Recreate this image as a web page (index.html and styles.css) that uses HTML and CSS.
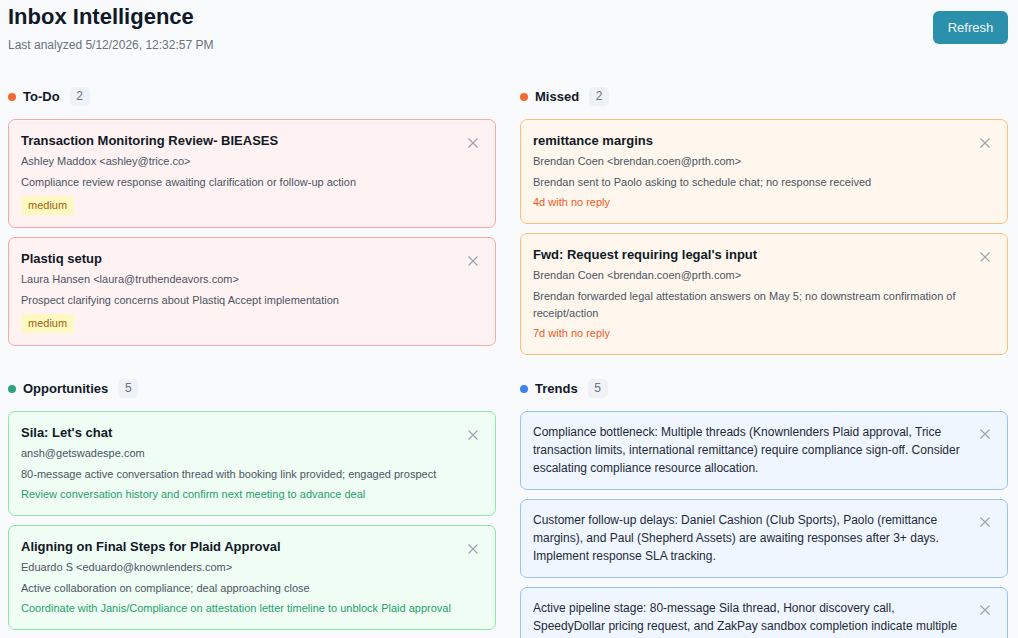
FILE: index.html
```html
<!DOCTYPE html>
<html>
<head>
  <meta charset="UTF-8">
  <title>Inbox Intelligence</title>
  <link rel="stylesheet" href="styles.css">
</head>
<body>
  <div class="page">
    <div class="top">
      <div>
        <h1 class="title">Inbox Intelligence</h1>
        <div class="analyzed">Last analyzed 5/12/2026, 12:32:57 PM</div>
      </div>
      <button class="refresh">Refresh</button>
    </div>

    <div class="grid">
      <!-- To-Do -->
      <div class="section">
        <div class="section-head">
          <span class="dot dot-todo"></span>
          <span class="section-name">To-Do</span>
          <span class="count">2</span>
        </div>
        <div class="card card-todo">
          <div class="card-body">
            <div class="card-title">Transaction Monitoring Review- BIEASES</div>
            <div class="sender">Ashley Maddox &lt;ashley@trice.co&gt;</div>
            <div class="summary">Compliance review response awaiting clarification or follow-up action</div>
            <span class="priority">medium</span>
          </div>
          <button class="close"><svg viewBox="0 0 10 10"><path d="M0.5 0.5 L9.5 9.5 M9.5 0.5 L0.5 9.5"/></svg></button>
        </div>
        <div class="card card-todo">
          <div class="card-body">
            <div class="card-title">Plastiq setup</div>
            <div class="sender">Laura Hansen &lt;laura@truthendeavors.com&gt;</div>
            <div class="summary">Prospect clarifying concerns about Plastiq Accept implementation</div>
            <span class="priority">medium</span>
          </div>
          <button class="close"><svg viewBox="0 0 10 10"><path d="M0.5 0.5 L9.5 9.5 M9.5 0.5 L0.5 9.5"/></svg></button>
        </div>
      </div>

      <!-- Missed -->
      <div class="section">
        <div class="section-head">
          <span class="dot dot-missed"></span>
          <span class="section-name">Missed</span>
          <span class="count">2</span>
        </div>
        <div class="card card-missed">
          <div class="card-body">
            <div class="card-title">remittance margins</div>
            <div class="sender">Brendan Coen &lt;brendan.coen@prth.com&gt;</div>
            <div class="summary">Brendan sent to Paolo asking to schedule chat; no response received</div>
            <div class="note note-missed">4d with no reply</div>
          </div>
          <button class="close"><svg viewBox="0 0 10 10"><path d="M0.5 0.5 L9.5 9.5 M9.5 0.5 L0.5 9.5"/></svg></button>
        </div>
        <div class="card card-missed">
          <div class="card-body">
            <div class="card-title">Fwd: Request requiring legal's input</div>
            <div class="sender">Brendan Coen &lt;brendan.coen@prth.com&gt;</div>
            <div class="summary">Brendan forwarded legal attestation answers on May 5; no downstream confirmation of receipt/action</div>
            <div class="note note-missed">7d with no reply</div>
          </div>
          <button class="close"><svg viewBox="0 0 10 10"><path d="M0.5 0.5 L9.5 9.5 M9.5 0.5 L0.5 9.5"/></svg></button>
        </div>
      </div>

      <!-- Opportunities -->
      <div class="section">
        <div class="section-head">
          <span class="dot dot-opp"></span>
          <span class="section-name">Opportunities</span>
          <span class="count">5</span>
        </div>
        <div class="card card-opp">
          <div class="card-body">
            <div class="card-title">Sila: Let's chat</div>
            <div class="sender">ansh@getswadespe.com</div>
            <div class="summary">80-message active conversation thread with booking link provided; engaged prospect</div>
            <div class="note note-opp">Review conversation history and confirm next meeting to advance deal</div>
          </div>
          <button class="close"><svg viewBox="0 0 10 10"><path d="M0.5 0.5 L9.5 9.5 M9.5 0.5 L0.5 9.5"/></svg></button>
        </div>
        <div class="card card-opp">
          <div class="card-body">
            <div class="card-title">Aligning on Final Steps for Plaid Approval</div>
            <div class="sender">Eduardo S &lt;eduardo@knownlenders.com&gt;</div>
            <div class="summary">Active collaboration on compliance; deal approaching close</div>
            <div class="note note-opp">Coordinate with Janis/Compliance on attestation letter timeline to unblock Plaid approval</div>
          </div>
          <button class="close"><svg viewBox="0 0 10 10"><path d="M0.5 0.5 L9.5 9.5 M9.5 0.5 L0.5 9.5"/></svg></button>
        </div>
      </div>

      <!-- Trends -->
      <div class="section">
        <div class="section-head">
          <span class="dot dot-trend"></span>
          <span class="section-name">Trends</span>
          <span class="count">5</span>
        </div>
        <div class="card card-trend">
          <div class="card-body trend-text">Compliance bottleneck: Multiple threads (Knownlenders Plaid approval, Trice transaction limits, international remittance) require compliance sign-off. Consider escalating compliance resource allocation.</div>
          <button class="close"><svg viewBox="0 0 10 10"><path d="M0.5 0.5 L9.5 9.5 M9.5 0.5 L0.5 9.5"/></svg></button>
        </div>
        <div class="card card-trend">
          <div class="card-body trend-text">Customer follow-up delays: Daniel Cashion (Club Sports), Paolo (remittance margins), and Paul (Shepherd Assets) are awaiting responses after 3+ days. Implement response SLA tracking.</div>
          <button class="close"><svg viewBox="0 0 10 10"><path d="M0.5 0.5 L9.5 9.5 M9.5 0.5 L0.5 9.5"/></svg></button>
        </div>
        <div class="card card-trend">
          <div class="card-body trend-text">Active pipeline stage: 80-message Sila thread, Honor discovery call, SpeedyDollar pricing request, and ZakPay sandbox completion indicate multiple deals progressing toward close.</div>
          <button class="close"><svg viewBox="0 0 10 10"><path d="M0.5 0.5 L9.5 9.5 M9.5 0.5 L0.5 9.5"/></svg></button>
        </div>
      </div>
    </div>
  </div>
</body>
</html>
```

FILE: styles.css
```css
html, body { margin: 0; padding: 0; background: #f8fafc; }
body { font-family: "Liberation Sans", Arial, Helvetica, sans-serif; color: #111827; }

.page { padding: 4px 10px 24px 8px; }

/* header */
.top { display: flex; justify-content: space-between; align-items: flex-start; }
.title { margin: 0; font-size: 22px; line-height: 26px; font-weight: 700; color: #111827; }
.analyzed { margin-top: 7px; font-size: 12px; line-height: 16px; color: #6b7280; }
.refresh {
  margin-top: 7px; width: 75px; height: 33px; border: none; border-radius: 6px;
  background: #2b90ac; color: #f1f8fb; font-family: inherit; font-size: 13px; cursor: pointer;
}

/* columns */
.grid { margin-top: 34px; display: grid; grid-template-columns: 1fr 1fr; column-gap: 24px; row-gap: 24px; }

.section-head { display: flex; align-items: center; height: 19px; margin-bottom: 13px; }
.dot { width: 8px; height: 8px; border-radius: 50%; margin-right: 7px; }
.dot-todo { background: #f26a33; }
.dot-missed { background: #f26a33; }
.dot-opp { background: #2da57a; }
.dot-trend { background: #3b82f6; }
.section-name { font-size: 13px; font-weight: 700; color: #111827; }
.count {
  margin-left: 10px; height: 19px; min-width: 20px; box-sizing: border-box; padding: 0 6px;
  border-radius: 5px; background: #eef1f6; color: #6b7280; font-size: 12px; line-height: 19px; text-align: center;
}

/* cards */
.card { display: flex; gap: 9px; border: 1px solid; border-radius: 7px; padding: 12px; margin-bottom: 9px; }
.card:last-child { margin-bottom: 0; }
.card-todo { background: #fef3f2; border-color: #f9a8a4; }
.card-missed { background: #fff7ed; border-color: #fbbf7c; }
.card-opp { background: #f0fdf4; border-color: #8ee6a9; }
.card-trend { background: #eff6ff; border-color: #98c2f4; padding-top: 11px; }

.card-body { flex: 1; min-width: 0; }
.card-title { font-size: 13px; line-height: 18px; font-weight: 700; color: #111827; }
.sender { margin-top: 3px; font-size: 11px; line-height: 17px; color: #4b5563; }
.summary { margin-top: 4px; font-size: 11px; line-height: 17px; color: #4b5563; }
.priority {
  display: inline-block; margin-top: 5px; padding: 2px 7px; border-radius: 4px;
  background: #fef9c3; color: #a16207; font-size: 11px; line-height: 15px;
}
.note { margin-top: 3px; font-size: 11px; line-height: 17px; }
.note-missed { color: #ef5a1f; }
.note-opp { color: #25a16a; }

.trend-text { font-size: 12px; line-height: 18px; color: #1f2937; }

.close {
  flex: none; width: 20px; height: 20px; margin-top: 1px; padding: 0; border: none; background: none;
  display: flex; align-items: center; justify-content: center; cursor: pointer;
}
.close svg { width: 10px; height: 10px; }
.close path { stroke: #9ca3af; stroke-width: 1.1; fill: none; }
```
